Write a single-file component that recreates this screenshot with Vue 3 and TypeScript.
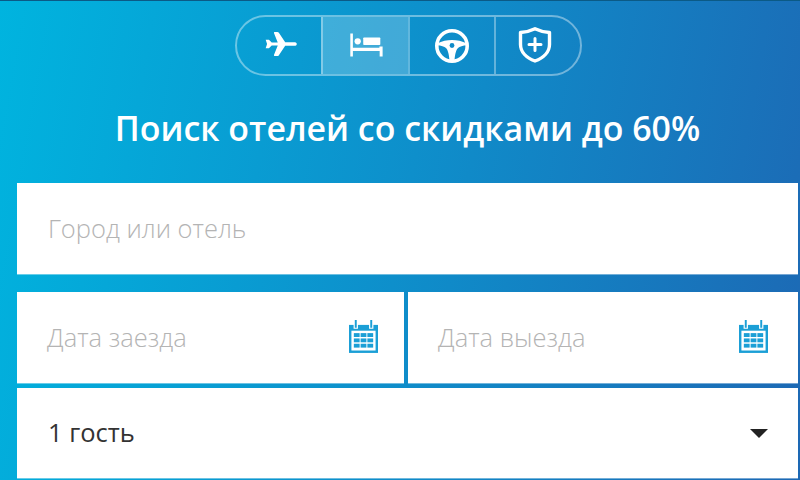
<script setup lang="ts">
const tabs = ['plane', 'bed', 'wheel', 'shield'];
const dates = ['Дата заезда', 'Дата выезда'];
</script>

<template>
  <div class="page">
    <div class="tabs">
      <div v-for="tab in tabs" :key="tab" class="tab" :class="[tab, { active: tab === 'bed' }]">
        <svg v-if="tab === 'plane'" width="32" height="26" viewBox="0 0 34 28" fill="#fff">
          <path d="M0.500 9.500l3.500 0 3 3h6.500L9.500 2.500c-.3-1 .1-1.500 1-1.500h2.500c.8 0 1.300.3 1.700.9L21.500 12h9.500c2 0 3 .6 3 2s-1 2-3 2h-9.500l-6.800 10.100c-.4.600-.9.900-1.700.9h-2.500c-.9 0-1.300-.5-1-1.500l4-10h-6.500l-3 3h-3.500l1.500-4.500z" />
        </svg>
        <svg v-else-if="tab === 'bed'" width="34" height="24" viewBox="0 0 36 26" fill="#fff">
          <path d="M1 0.500h2.800v15.500h28.700v-1.500h3.500V25.500h-3.200v-6H3.800v6H1z" />
          <circle cx="9" cy="9" r="3.400" />
          <rect x="15" y="5" width="18.500" height="8" rx="0.800" />
        </svg>
        <svg v-else-if="tab === 'wheel'" width="36" height="36" viewBox="0 0 36 36" fill="none" stroke="#fff">
          <circle cx="18" cy="18" r="15.200" stroke-width="3.600" />
          <path d="M3 15.500c5-2.500 10-3.500 15-3.500s10 1 15 3.500v1.800c-4 .2-7.500 1.300-9 2.700-1.600 1.500-3 5.500-3.500 12.500h-5C15 25.500 13.600 21.500 12 20c-1.500-1.400-5-2.500-9-2.700z" fill="#fff" stroke="none" />
          <circle cx="18" cy="17.500" r="2.400" fill="#0f8bc9" stroke="none" />
        </svg>
        <svg v-else width="34" height="36" viewBox="0 0 34 36" fill="none" stroke="#fff" stroke-width="3.400">
          <path d="M2.500 5.500C8 5.300 12.500 4 17 1.800 21.500 4 26 5.300 31.500 5.500v12c0 7.500-6 13.500-14.500 16.500C8.500 31 2.500 25 2.500 17.500z" stroke-linejoin="round" />
          <path d="M17 11.500v12M11 17.500h12" stroke-width="3" stroke-linecap="round" />
        </svg>
      </div>
    </div>

    <h1 class="title">Поиск отелей со скидками до 60%</h1>

    <div class="form">
      <div class="field">
        <span class="placeholder">Город или отель</span>
      </div>
      <div class="dates">
        <div v-for="label in dates" :key="label" class="field date">
          <span class="placeholder">{{ label }}</span>
          <svg class="calendar" width="29" height="33" viewBox="0 0 30 34">
            <path d="M0 5h30v29H0z" fill="#1b9fd6" />
            <rect x="2.500" y="11" width="25" height="20.500" fill="#fff" />
            <path d="M7 1v8M23 1v8" stroke="#fff" stroke-width="4.500" />
            <path d="M7 0v8M23 0v8" stroke="#1b9fd6" stroke-width="2" />
            <g fill="#1b9fd6">
              <rect x="5" y="13.500" width="6" height="4" />
              <rect x="12" y="13.500" width="6" height="4" />
              <rect x="19" y="13.500" width="6" height="4" />
              <rect x="5" y="19" width="6" height="4" />
              <rect x="12" y="19" width="6" height="4" />
              <rect x="19" y="19" width="6" height="4" />
              <rect x="5" y="24.500" width="6" height="4" />
              <rect x="12" y="24.500" width="6" height="4" />
              <rect x="19" y="24.500" width="6" height="4" />
            </g>
          </svg>
        </div>
      </div>
      <div class="field guests">
        <span class="value">1 гость</span>
        <span class="caret"></span>
      </div>
    </div>
  </div>
</template>

<style>
html,
body {
  margin: 0;
  overflow: hidden;
}
</style>

<style scoped>
.page {
  box-sizing: border-box;
  width: 800px;
  height: 480px;
  padding: 14px 2px 0 17px;
  overflow: hidden;
  font-family: "Open Sans", sans-serif;
  background: linear-gradient(100deg, #00b4df 0%, #0e8fcb 50%, #1d68b4 100%);
  border-top: 1px solid #0b5a86;
}

.tabs {
  display: flex;
  box-sizing: border-box;
  width: 347px;
  height: 61px;
  margin: 0 0 0 218px;
  overflow: hidden;
  border: 2px solid rgba(255, 255, 255, 0.4);
  border-radius: 31px;
}

.tab {
  display: flex;
  flex: 1;
  align-items: center;
  justify-content: center;
  border-left: 2px solid rgba(255, 255, 255, 0.35);
}

.tab:first-child {
  border-left: 0;
}

.tab.active {
  background: rgba(255, 255, 255, 0.22);
}

.plane svg {
  margin: -3px 0 0 4px;
}

.bed svg {
  margin: -1px 0 0 2px;
}

.shield svg {
  margin: -2px 6px 0 0;
}

.title {
  margin: 29px 0 0;
  color: #fff;
  font-size: 33.900px;
  font-weight: 600;
  line-height: 46px;
  text-align: center;
}

.form {
  display: flex;
  flex-direction: column;
  margin-top: 32px;
}

.field {
  display: flex;
  box-sizing: border-box;
  align-items: center;
  height: 91px;
  padding-left: 31px;
  background: #fff;
  box-shadow: 0 1px 0 rgba(255, 255, 255, 0.4);
}

.placeholder {
  margin-top: -2px;
  color: #b4b4b4;
  font-size: 25.500px;
  font-weight: 300;
}

.dates {
  display: grid;
  grid-template-columns: 387px 1fr;
  gap: 4px;
  margin: 18px 0 5px;
}

.date {
  justify-content: space-between;
  padding-right: 26px;
  padding-left: 30px;
}

.date:last-child {
  padding-right: 30px;
}

.calendar {
  margin-top: -2px;
}

.guests {
  justify-content: space-between;
  height: 90px;
  padding-right: 30px;
}

.value {
  margin-top: -3px;
  color: #333;
  font-size: 25.500px;
}

.caret {
  width: 0;
  height: 0;
  border-top: 9px solid #222;
  border-right: 9px solid transparent;
  border-left: 9px solid transparent;
}
</style>
